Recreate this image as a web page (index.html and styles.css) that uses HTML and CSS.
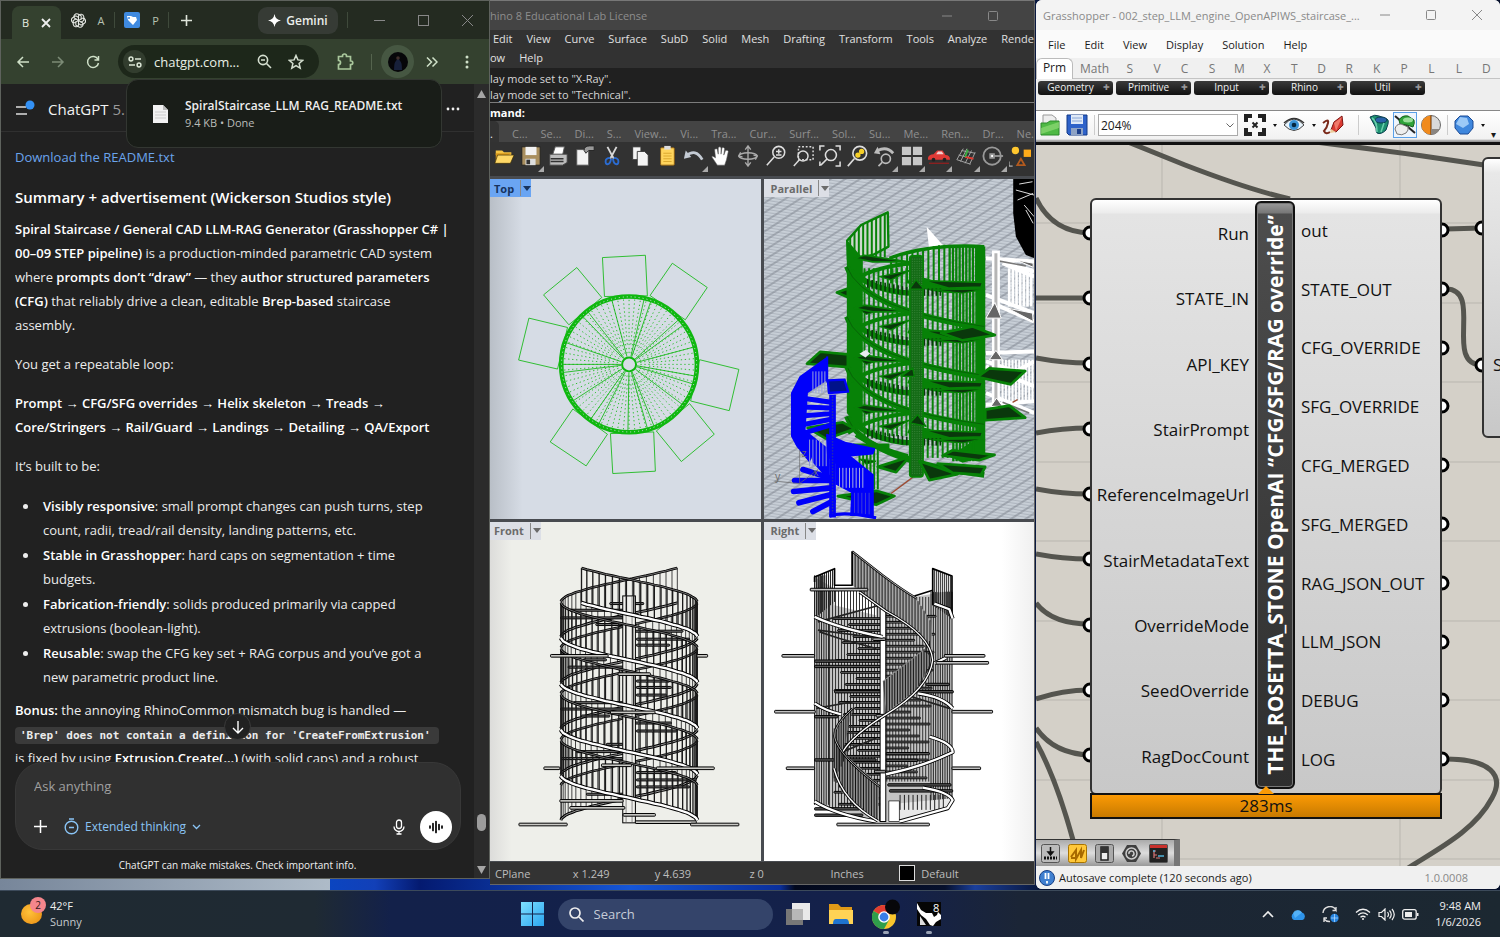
FILE: index.html
```html
<!DOCTYPE html>
<html lang="en">
<head>
<meta charset="utf-8">
<title>Desktop</title>
<link rel="stylesheet" href="styles.css">
</head>
<body>
<div class="desktop">
<main class="windows">

<section class="win chrome" aria-label="Chrome">
  <div class="tabstrip">
    <div class="tab tab-active"><span>B</span><button class="plain" aria-label="Close tab"><svg width="10" height="10" viewBox="0 0 10 10" stroke="#eee" stroke-width="1.8"><path d="M1 1l8 8M9 1l-8 8"/></svg></button></div>
    <div class="tab"><svg width="15" height="15" viewBox="0 0 24 24" fill="none" stroke="#e6e9e4" stroke-width="1.7"><g id="petal"><path d="M12 12l0-7.500a4.500 4.500 0 0 1 8.500 1.500v6l-5 3"/></g><use href="#petal" transform="rotate(60 12 12)"/><use href="#petal" transform="rotate(120 12 12)"/><use href="#petal" transform="rotate(180 12 12)"/><use href="#petal" transform="rotate(240 12 12)"/><use href="#petal" transform="rotate(300 12 12)"/></svg><span>A</span></div>
    <div class="tab"><svg width="16" height="16" viewBox="0 0 16 16"><rect width="16" height="16" rx="2" fill="#3f8ae0"/><path d="M3 4h4l2 1h3l1 3-4 5-5-5z" fill="#fff"/><circle cx="5" cy="6" r="1" fill="#3f8ae0"/></svg><span>P</span></div>
    <button class="plain newtab" aria-label="New tab"><svg width="11" height="11" viewBox="0 0 11 11" stroke="#dfe5db" stroke-width="1.6"><path d="M5.500 0v11M0 5.500h11"/></svg></button>
    <button class="gemini"><svg width="13" height="13" viewBox="0 0 12 12"><path d="M6 0q.8 5.200 6 6-5.200.8-6 6Q5.200 6.800 0 6q5.200-.8 6-6" fill="#fff"/></svg>Gemini</button>
    <div class="winbtns dim">
      <button aria-label="Minimize"><svg width="11" height="11" viewBox="0 0 11 11"><path d="M0 5.500h11"/></svg></button>
      <button aria-label="Maximize"><svg width="11" height="11" viewBox="0 0 11 11"><rect x=".5" y=".5" width="10" height="10"/></svg></button>
      <button aria-label="Close"><svg width="11" height="11" viewBox="0 0 11 11"><path d="M0 0l11 11M11 0L0 11"/></svg></button>
    </div>
  </div>
  <div class="navbar">
    <button class="plain" aria-label="Back"><svg width="14" height="14" viewBox="0 0 14 14" fill="none" stroke="#cfe0c8" stroke-width="1.500"><path d="M13 7H2M7 2L2 7l5 5"/></svg></button>
    <button class="plain" aria-label="Forward"><svg width="14" height="14" viewBox="0 0 14 14" fill="none" stroke="#7c8b76" stroke-width="1.500"><path d="M1 7h11M7 2l5 5-5 5"/></svg></button>
    <button class="plain" aria-label="Reload"><svg width="14" height="14" viewBox="0 0 14 14" fill="none" stroke="#cfe0c8" stroke-width="1.500"><path d="M12 4.500A5.500 5.500 0 1 0 12.500 8M12.500 1v4h-4"/></svg></button>
    <div class="omnibox">
      <button class="plain siteinfo" aria-label="Site information"><svg width="14" height="14" viewBox="0 0 14 14" fill="none" stroke="#dbe6d5" stroke-width="1.500"><circle cx="3" cy="4" r="1.900"/><path d="M7 4h6M1 10h6"/><circle cx="11" cy="10" r="1.900"/></svg></button>
      <input class="url" aria-label="Address" value="chatgpt.com...">
      <button class="plain" aria-label="Zoom"><svg width="15" height="15" viewBox="0 0 15 15" fill="none" stroke="#d5dfd0" stroke-width="1.600"><circle cx="6" cy="6" r="4.600"/><path d="M9.500 9.500L14 14M4 6h4"/></svg></button>
      <button class="plain" aria-label="Bookmark"><svg width="16" height="16" viewBox="0 0 16 16" fill="none" stroke="#d5dfd0" stroke-width="1.500"><path d="M8 1.500l1.900 4.400 4.800.4-3.600 3.100 1.100 4.700L8 11.600l-4.200 2.500 1.100-4.700-3.600-3.100 4.800-.4z"/></svg></button>
    </div>
    <button class="plain ext" aria-label="Extensions"><svg width="17" height="17" viewBox="0 0 17 17" fill="none" stroke="#a9c79c" stroke-width="1.700"><path d="M1.500 3.500h4V3a2 2 0 0 1 4 0v.5h4V8h.5a1.500 1.500 0 0 1 0 3.500h-.5v4.500h-12v-4.500a2 2 0 0 0 0-4z"/></svg></button>
    <span class="navsep"></span>
    <button class="avatar" aria-label="Profile"><svg width="20" height="20" viewBox="0 0 20 20"><circle cx="10" cy="10" r="10" fill="#060609"/><path d="M6 18q0-8 2-9l2-4 2 4q2 1 2 9z" fill="#17203a"/><circle cx="10" cy="6" r="1.800" fill="#3f2f2c"/></svg></button>
    <button class="plain" aria-label="More tools"><svg width="12" height="10" viewBox="0 0 12 10" fill="none" stroke="#cfe0c8" stroke-width="1.500"><path d="M1 .5L5.500 5 1 9.500M6.500.5L11 5 6.500 9.500"/></svg></button>
    <button class="plain" aria-label="Menu"><svg width="4" height="14" viewBox="0 0 4 14" fill="#cfe0c8"><circle cx="2" cy="2" r="1.500"/><circle cx="2" cy="7" r="1.500"/><circle cx="2" cy="12" r="1.500"/></svg></button>
  </div>
  <aside class="download">
    <svg width="15" height="19" viewBox="0 0 15 19"><path d="M0 1h10l5 5v13H0z" fill="#f2f2f2"/><path d="M10 1v5h5z" fill="#bbb"/><path d="M2 8h11M2 11h11M2 14h11" stroke="#ccc"/></svg>
    <div><strong>SpiralStaircase_LLM_RAG_README.txt</strong><span>9.4 KB • Done</span></div>
  </aside>
  <div class="page">
    <div class="chat">
      <header class="chathead">
        <button class="plain" aria-label="Open sidebar"><svg width="20" height="18" viewBox="0 0 20 18"><path d="M1 7h10M1 14h11" stroke="#ddd" stroke-width="1.600"/><circle cx="15" cy="5" r="4.500" fill="#3391f5"/></svg></button>
        <h1>ChatGPT <span>5.</span></h1>
        <button class="plain dots" aria-label="More"><svg width="14" height="4" viewBox="0 0 14 4" fill="#eee"><circle cx="2" cy="2" r="1.400"/><circle cx="7" cy="2" r="1.400"/><circle cx="12" cy="2" r="1.400"/></svg></button>
      </header>
      <article class="answer">
        <p><a href="#readme">Download the README.txt</a></p>
        <h2>Summary + advertisement (Wickerson Studios style)</h2>
        <p class="lead"><b>Spiral Staircase / General CAD LLM-RAG Generator (Grasshopper C# |<br>00–09 STEP pipeline)</b> is a production-minded parametric CAD system<br>where <b>prompts don’t “draw”</b> — they <b>author structured parameters<br>(CFG)</b> that reliably drive a clean, editable <b>Brep-based</b> staircase<br>assembly.</p>
        <p>You get a repeatable loop:</p>
        <p><b>Prompt → CFG/SFG overrides → Helix skeleton → Treads →<br>Core/Stringers → Rail/Guard → Landings → Detailing → QA/Export</b></p>
        <p>It’s built to be:</p>
        <ul>
          <li><b>Visibly responsive</b>: small prompt changes can push turns, step<br>count, radii, tread/rail density, landing patterns, etc.</li>
          <li><b>Stable in Grasshopper</b>: hard caps on segmentation + time<br>budgets.</li>
          <li><b>Fabrication-friendly</b>: solids produced primarily via capped<br>extrusions (boolean-light).</li>
          <li><b>Reusable</b>: swap the CFG key set + RAG corpus and you’ve got a<br>new parametric product line.</li>
        </ul>
        <p class="bonus"><b>Bonus:</b> the annoying RhinoCommon mismatch bug is handled —<br><code>'Brep' does not contain a definition for 'CreateFromExtrusion'</code><br>is fixed by using <b>Extrusion.Create(…)</b> (with solid caps) and a robust</p>
      </article>
      <div class="composer">
        <button class="scrolldown" aria-label="Scroll to bottom"><svg width="12" height="14" viewBox="0 0 12 14" fill="none" stroke="#fff" stroke-width="1.400"><path d="M6 1v12M1 8l5 5 5-5"/></svg></button>
        <input class="ask" aria-label="Ask anything" placeholder="Ask anything">
        <div class="tools">
          <button class="plain" aria-label="Add"><svg width="13" height="13" viewBox="0 0 13 13" stroke="#fff" stroke-width="1.500"><path d="M6.500 0v13M0 6.500h13"/></svg></button>
          <button class="plain thinking"><svg width="15" height="17" viewBox="0 0 15 17" fill="none" stroke="#8ac4f5" stroke-width="1.400"><circle cx="7.500" cy="9.500" r="6.300"/><path d="M5 1h5M5 9.500h5"/></svg>Extended thinking<svg width="9" height="6" viewBox="0 0 9 6" fill="none" stroke="#8ac4f5" stroke-width="1.300"><path d="M1 1l3.500 3.500L8 1"/></svg></button>
          <button class="plain mic" aria-label="Dictate"><svg width="12" height="16" viewBox="0 0 12 16" fill="none" stroke="#fff" stroke-width="1.300"><rect x="3.500" y="1" width="5" height="8.500" rx="2.500"/><path d="M1 7.500a5 5 0 0 0 10 0M6 12.500V15M3.500 15h5"/></svg></button>
          <button class="voice" aria-label="Voice mode"><svg width="16" height="14" viewBox="0 0 16 14" stroke="#000" stroke-width="1.700" stroke-linecap="round"><path d="M2 6v2M5 3.500v7M8 1.500v11M11 4.500v5M14 6v2"/></svg></button>
        </div>
      </div>
      <p class="foot">ChatGPT can make mistakes. Check important info.</p>
    </div>
    <div class="scrollbar"><svg width="9" height="8" viewBox="0 0 9 8"><path d="M4.500 0L9 8H0z" fill="#a5a5a5"/></svg><i class="thumb"></i><svg width="9" height="8" viewBox="0 0 9 8"><path d="M4.500 8L9 0H0z" fill="#a5a5a5"/></svg></div>
  </div>
</section>

<section class="win rhino" aria-label="Rhino">
  <div class="rtitle"><span>hino 8 Educational Lab License</span><div class="winbtns"><button aria-label="Minimize"><svg width="10" height="10" viewBox="0 0 10 10"><path d="M0 5h10"/></svg></button><button aria-label="Maximize"><svg width="10" height="10" viewBox="0 0 10 10"><rect x=".5" y=".5" width="9" height="9" rx="1"/></svg></button></div></div>
  <nav class="rmenu"><div><span>Edit</span><span>View</span><span>Curve</span><span>Surface</span><span>SubD</span><span>Solid</span><span>Mesh</span><span>Drafting</span><span>Transform</span><span>Tools</span><span>Analyze</span><span>Rende</span></div><div class="second"><span>ow</span><span>Help</span></div></nav>
  <div class="history"><p>lay mode set to "X-Ray".</p><p>lay mode set to "Technical".</p></div>
  <label class="command"><b>mand:</b><input aria-label="Command"></label>
  <nav class="rtabs"><span class="on">.</span><span>C...</span><span>Se...</span><span>Di...</span><span>S...</span><span>View...</span><span>Vi...</span><span>Tra...</span><span>Cur...</span><span>Surf...</span><span>Sol...</span><span>Su...</span><span>Me...</span><span>Ren...</span><span>Dr...</span><span>Ne.</span></nav>
  <div class="rtools">
    <button aria-label="Open"><svg viewBox="0 0 24 24"><path d="M3 6h7l2 2h8v3H3z" fill="#f5c443"/><path d="M3 20V9h17" fill="#d99a1c"/><path d="M2 20l3-9h18l-4 9z" fill="#ffd866" stroke="#3a2a00" stroke-width=".7"/></svg></button>
    <button class="more" aria-label="Save"><svg viewBox="0 0 24 24"><path d="M2 2h20v20H2z" fill="#a98f5f" stroke="#222"/><path d="M6 2h12v9H6z" fill="#f2f2f2"/><path d="M6 15h11v7H6z" fill="#ddd"/><path d="M7 16h4v5H7z" fill="#333"/></svg></button>
    <button aria-label="Print"><svg viewBox="0 0 24 24"><path d="M9 2h10l-2 9H6z" fill="#fff" stroke="#555"/><path d="M3 10h19v9l-5 3H3z" fill="#bdbdbd" stroke="#444"/><path d="M4 15h14M4 18h14" stroke="#333" stroke-width="1.500"/></svg></button>
    <button aria-label="Properties"><svg viewBox="0 0 24 24"><path d="M3 5h13v17H3z" fill="#f2f2f2" stroke="#555"/><path d="M11 6q0-5 6-5h5v5h-6l-3 3z" fill="#999" stroke="#222"/></svg></button>
    <button aria-label="Cut"><svg viewBox="0 0 24 24" fill="none"><path d="M7 2l7 13M17 2l-7 13" stroke="#d8d8d8" stroke-width="2"/><path d="M10 14q-5 0-5 4 0 3 2 3 3 0 4-6M14 14q5 0 5 4 0 3-2 3-3 0-4-6" stroke="#2b6bd0" stroke-width="2"/></svg></button>
    <button aria-label="Copy"><svg viewBox="0 0 24 24" fill="#f4f4f4" stroke="#333"><path d="M4 2h9v14H4z"/><path d="M9 7h8l4 4v12H9z"/></svg></button>
    <button aria-label="Paste"><svg viewBox="0 0 24 24"><rect x="5" y="3" width="15" height="19" rx="1" fill="#ffd45c" stroke="#8a5c10"/><rect x="9" y="1" width="7" height="4" fill="#ddd"/><path d="M8 9h9M8 12h9M8 15h9M8 18h9" stroke="#d9a52b"/></svg></button>
    <button class="more" aria-label="Undo"><svg viewBox="0 0 24 24" fill="none"><path d="M3 12q11-9 18 4" stroke="#c4cbd4" stroke-width="3"/><path d="M1 15l2-9 6 7z" fill="#c4cbd4"/></svg></button>
    <button aria-label="Pan"><svg viewBox="0 0 24 24"><path d="M8 22L2 13q0-2 4 1L5 5q2-2 3 0l1 5V3q2-2 3 0v7l1-7q2-1 3 1l-1 7 2-5q2-1 3 1l-2 9-2 6z" fill="#fff" stroke="#555" stroke-width=".6"/></svg></button>
    <button aria-label="Rotate view"><svg viewBox="0 0 24 24" fill="none" stroke="#aaa" stroke-width="1.500"><ellipse cx="12" cy="12" rx="10" ry="3.500"/><path d="M12 1v22M9 5l3-4 3 4M9 19l3 4 3-4M6 13l-4-1 2-4M18 11l4 1-2 4"/></svg></button>
    <button aria-label="Zoom"><svg viewBox="0 0 24 24" fill="none" stroke="#ddd" stroke-width="1.700"><circle cx="15" cy="8" r="6.500"/><path d="M10 13l-8 9M12 7h6M15 4.500v5M12 11h6"/></svg></button>
    <button aria-label="Zoom window"><svg viewBox="0 0 24 24" fill="none" stroke="#ddd" stroke-width="1.600"><path d="M7 2h16v14H7z" stroke-dasharray="2 2"/><circle cx="12" cy="12" r="5.500"/><path d="M8 16l-6 7"/></svg></button>
    <button aria-label="Zoom extents"><svg viewBox="0 0 24 24" fill="none" stroke="#ddd" stroke-width="1.700"><circle cx="13" cy="11" r="6"/><path d="M9 15l-7 7M1 6V1h5M18 1h5v5M23 18v5h-5M1 18v5"/></svg></button>
    <button aria-label="Zoom selected"><svg viewBox="0 0 24 24" fill="none" stroke="#ddd" stroke-width="1.800"><circle cx="15" cy="9" r="7.500"/><path d="M9 15l-7 8"/><circle cx="13" cy="11" r="2" stroke="#f5cf28" fill="#f5cf28"/><circle cx="17" cy="7" r="2" stroke="#f5cf28" fill="#f5cf28"/></svg></button>
    <button class="more" aria-label="Undo view"><svg viewBox="0 0 24 24" fill="none" stroke="#bbb" stroke-width="1.800"><circle cx="14" cy="15" r="5"/><path d="M10 19l-4 4"/><path d="M5 6q10-5 17 3" stroke-width="3"/><path d="M1 9l4-7 3 8z" fill="#bbb" stroke="none"/></svg></button>
    <button class="more" aria-label="Viewports"><svg viewBox="0 0 24 24" fill="#c7c7c7"><path d="M1 2h10v9H1zM13 2h10v9H13zM1 13h10v9H1zM13 13h10v9H13z"/></svg></button>
    <button class="more" aria-label="Render"><svg viewBox="0 0 24 24"><path d="M0 14q1-4 6-4l4-4h6l3 5q5 0 5 5H0z" fill="#e03a36"/><path d="M9 10l2-3h4l2 3z" fill="#f3cfcf"/><circle cx="6" cy="16" r="2" fill="#222"/><circle cx="18" cy="16" r="2" fill="#222"/><path d="M1 20h22" stroke="#8a2020" stroke-width="1.500"/></svg></button>
    <button class="more" aria-label="CPlane"><svg viewBox="0 0 24 24" fill="none" stroke="#aaa"><path d="M2 16L9 4M6 18l7-14M11 20l7-14M16 21l6-13M7 6l15 3M4 11l16 4M2 16l15 5"/><path d="M11 13l9 2" stroke="#e03a2f" stroke-width="2"/><path d="M11 13l3-8" stroke="#3cb043" stroke-width="2"/></svg></button>
    <button class="more" aria-label="Named views"><svg viewBox="0 0 24 24" fill="none" stroke="#999" stroke-width="2"><circle cx="11" cy="12" r="9.500"/><path d="M10 12h13"/><path d="M9 10h4v4H9z" fill="#fff"/></svg></button>
    <button aria-label="Select"><svg viewBox="0 0 24 24"><circle cx="7" cy="6" r="4" fill="#ffc72e"/><path d="M16 5h8v8h-8z" fill="#ffab1a"/><path d="M9 22l4-7 4 7z" fill="none" stroke="#b25a1e" stroke-width="2"/><path d="M0 18v5h4" stroke="#ddd" fill="none"/></svg></button>
  </div>
  <div class="views">
    <div class="view v-top"><svg id="top" viewBox="0 -63 813 1020"></svg><button class="vlabel on"><span>Top</span><i></i></button></div>
    <div class="view v-par"><svg id="parallel" viewBox="3 -3 813 1020"></svg><button class="vlabel"><span>Parallel</span><i></i></button></div>
    <div class="view v-front"><svg id="front" viewBox="0 0 813 1020"></svg><button class="vlabel"><span>Front</span><i></i></button></div>
    <div class="view v-right"><svg id="right" viewBox="3 0 813 1020"></svg><button class="vlabel"><span>Right</span><i></i></button></div>
  </div>
  <div class="rstatus"><span>CPlane</span><span>x 1.249</span><span>y 4.639</span><span>z 0</span><span>Inches</span><span class="layer"><i></i>Default</span></div>
</section>

<section class="win gh" aria-label="Grasshopper">
  <div class="gtitle"><span>Grasshopper - 002_step_LLM_engine_OpenAPIWS_staircase_...</span><div class="winbtns"><button aria-label="Minimize"><svg width="10" height="10" viewBox="0 0 10 10"><path d="M0 5h10"/></svg></button><button aria-label="Maximize"><svg width="10" height="10" viewBox="0 0 10 10"><rect x=".5" y=".5" width="9" height="9" rx="1"/></svg></button><button aria-label="Close"><svg width="10" height="10" viewBox="0 0 10 10"><path d="M0 0l10 10M10 0L0 10"/></svg></button></div></div>
  <nav class="gmenu"><span>File</span><span>Edit</span><span>View</span><span>Display</span><span>Solution</span><span>Help</span></nav>
  <nav class="gtabs"><span class="on">Prm</span><span>Math</span><span>S</span><span>V</span><span>C</span><span>S</span><span>M</span><span>X</span><span>T</span><span>D</span><span>R</span><span>K</span><span>P</span><span>L</span><span>L</span><span>D</span></nav>
  <div class="gpanels"><button>Geometry<i>✚</i></button><button>Primitive<i>✚</i></button><button>Input<i>✚</i></button><button>Rhino<i>✚</i></button><button>Util<i>✚</i></button></div>
  <div class="gtools">
    <button aria-label="Open"><svg width="20" height="22" viewBox="0 0 20 22"><path d="M3 1h9l4 3v8H3z" fill="#eee" stroke="#999"/><path d="M1 9h6l3-2h9v14H1z" fill="#4fb944" stroke="#2c8a2a"/><path d="M1 14l18-6v6L1 20z" fill="#9be07f" opacity=".6"/></svg></button>
    <button aria-label="Save"><svg width="22" height="22" viewBox="0 0 22 22"><path d="M1 1h20v20H3l-2-2z" fill="#2e62c9" stroke="#153a86"/><path d="M5 1h12v9H5z" fill="#dfe9f7"/><path d="M6 4h10M6 7h10" stroke="#8aa6d6"/><path d="M5 14h12v7H5z" fill="#8fa3c4"/><path d="M11 15h4v5h-4z" fill="#1d3f8a"/></svg></button>
    <span class="gsep"></span>
    <select aria-label="Zoom level"><option>204%</option></select>
    <button class="dd" aria-label="Zoom extents"><svg width="22" height="22" viewBox="0 0 22 22" fill="none" stroke="#222" stroke-width="4"><path d="M2 8V2h6M14 2h6v6M20 14v6h-6M8 20H2v-6"/><path d="M8.500 8.500l5 5M13.500 8.500l-5 5" stroke-width="2"/></svg></button>
    <button class="dd" aria-label="Named views"><svg width="22" height="16" viewBox="0 0 22 16"><path d="M1 8q10-12 20 0-10 11-20 0" fill="#e8f3fb" stroke="#444"/><circle cx="11" cy="8" r="5" fill="#3d94d6"/><circle cx="11" cy="8" r="2.300" fill="#06263e"/><path d="M1 6q10-9 20 0" fill="none" stroke="#333" stroke-width="1.500"/></svg></button>
    <button class="sketch" aria-label="Sketch"><svg width="22" height="20" viewBox="0 0 22 20"><path d="M1 8q6-5 5 0t-4 8q2 4 6 1" fill="none" stroke="#7a2a1a" stroke-width="2"/><path d="M9 15l3-8 8-6 1 9-7 7z" fill="#d93a32" stroke="#7d1512"/><path d="M12 8l8-6-6 14z" fill="#ef7a6c"/><path d="M8 18l1-4 5 3z" fill="#eccb9a"/></svg></button>
    <span class="gsep"></span>
    <button aria-label="No preview"><svg width="20" height="22" viewBox="0 0 20 22"><path d="M1 3q5-3 9-1l8 3q2 1 1 5l-2 6q-5 5-9 3-1-1-1-5z" fill="#1d8f6f" stroke="#0b3f4f"/><ellipse cx="12" cy="6" rx="6" ry="3" fill="#2a62a8" stroke="#0b3f4f"/><path d="M3 4q5 3 5 14M15 9l-3 9" fill="none" stroke="#6bd0ae" stroke-width="1.500"/></svg></button>
    <button class="sel" aria-label="Shaded preview"><svg width="22" height="22" viewBox="0 0 22 22"><path d="M1 2l20 17" stroke="#222" stroke-width="2"/><path d="M5 6q3-5 9-4l6 4q1 3-1 7l-6-2-7-1z" fill="#2ea33a" stroke="#15601c"/><ellipse cx="14" cy="6" rx="5" ry="2.500" fill="#9ade9a"/><path d="M1 15q1-5 6-5l7 3q1 3-2 6-4 3-9 1z" fill="#eee" stroke="#777"/></svg></button>
    <button aria-label="Preview settings"><svg width="20" height="20" viewBox="0 0 20 20"><circle cx="10" cy="10" r="9.500" fill="#d9d9d9" stroke="#666"/><path d="M10 .5a9.500 9.500 0 0 0 0 19z" fill="#f08a1d"/><path d="M10 .5v19" stroke="#6b3300"/><path d="M10 14h8.500a9 9 0 0 1-8.500 5.500z" fill="#8a8580"/></svg></button>
    <span class="gsep"></span>
    <button class="dd" aria-label="Mesh"><svg width="20" height="20" viewBox="0 0 20 20"><path d="M6 1h8l5 5v7l-5 6H6l-5-6V6z" fill="#3f87dd" stroke="#1c4a94"/><path d="M6 2l7 1 2 6-6 4-7-4z" fill="#9cc9f7"/></svg></button>
    <button class="over" aria-label="More">▾</button>
  </div>
  <div class="canvas">
    <svg id="wires" width="464" height="722" viewBox="1036 145 464 722"></svg>
    <div class="node">
      <div class="ports in"><span>Run</span><span>STATE_IN</span><span>API_KEY</span><span>StairPrompt</span><span>ReferenceImageUrl</span><span>StairMetadataText</span><span>OverrideMode</span><span>SeedOverride</span><span>RagDocCount</span></div>
      <div class="spine"><span>THE_ROSETTA_STONE OpenAI “CFG/SFG/RAG override”</span></div>
      <div class="ports out"><span>out</span><span>STATE_OUT</span><span>CFG_OVERRIDE</span><span>SFG_OVERRIDE</span><span>CFG_MERGED</span><span>SFG_MERGED</span><span>RAG_JSON_OUT</span><span>LLM_JSON</span><span>DEBUG</span><span>LOG</span></div>
    </div>
    <div class="timing">283ms</div>
    <div class="node2">S</div>
    <div class="dock">
      <button aria-label="Align"><svg width="19" height="19" viewBox="0 0 19 19"><rect x=".5" y=".5" width="18" height="18" rx="2" fill="#bbb" stroke="#555"/><path d="M9.500 3v6M7 8h5l-2.500 3z" stroke="#111" fill="#111" stroke-width="1.500"/><path d="M3 14h13" stroke="#111" stroke-width="3" stroke-dasharray="2 1"/></svg></button>
      <button aria-label="Scribble"><svg width="19" height="19" viewBox="0 0 19 19"><rect x=".5" y=".5" width="18" height="18" rx="2" fill="#ffc83a" stroke="#a87400"/><path d="M3 13l5-7v9l5-9v8l3-8M3 14h5" fill="none" stroke="#a86a00" stroke-width="2"/></svg></button>
      <button aria-label="Toggle"><svg width="19" height="19" viewBox="0 0 19 19"><rect x=".5" y=".5" width="18" height="18" rx="2" fill="#aaa" stroke="#555"/><path d="M6 3h7v13H6z" fill="#eee" stroke="#222" stroke-width="1.500"/><path d="M6 3h7v6H6z" fill="#333"/></svg></button>
      <button aria-label="Spiral"><svg width="19" height="19" viewBox="0 0 19 19"><path d="M5 1h9l5 8.500-5 8.500H5L0 9.500z" fill="#3f3f3f"/><circle cx="9.500" cy="9.500" r="5.500" fill="none" stroke="#ccc" stroke-width="1.500"/><path d="M7 10a2.500 2.500 0 1 1 3 2" fill="none" stroke="#ccc" stroke-width="1.500"/></svg></button>
      <button aria-label="Profiler"><svg width="19" height="19" viewBox="0 0 19 19"><rect x=".5" y=".5" width="18" height="18" rx="1" fill="#222" stroke="#555"/><path d="M1 1h17v3H1z" fill="#c9302c"/><path d="M4 7h3M5 11h3M7 14h4M5 7v7" fill="none" stroke="#d77" stroke-width="1.200"/><path d="M9 12h6M4 7h2" stroke="#4fb3d9" stroke-width="1.500"/></svg></button>
    </div>
  </div>
  <div class="gstatus"><svg width="16" height="16" viewBox="0 0 16 16"><circle cx="8" cy="8" r="7.500" fill="#3f7fd0" stroke="#173f85"/><path d="M6.500 3v6M9.500 3v6M8 11v2.500" stroke="#fff" stroke-width="1.800"/></svg><span>Autosave complete (120 seconds ago)</span><em>1.0.0008</em></div>
</section>
</main>

<footer class="taskbar">
  <div class="weather"><div class="sun"><b>2</b></div><div><span>42°F</span><small>Sunny</small></div></div>
  <div class="apps">
    <button aria-label="Start"><svg width="23" height="24" viewBox="0 0 23 24"><defs><linearGradient id="wg" x2="1" y2="1"><stop stop-color="#7fe0ff"/><stop offset="1" stop-color="#2aa5f0"/></linearGradient></defs><path d="M0 0h11v11.500H0zM12 0h11v11.500H12zM0 12.500h11V24H0zM12 12.500h11V24H12z" fill="url(#wg)"/></svg></button>
    <label class="search"><svg width="15" height="15" viewBox="0 0 15 15" fill="none" stroke="#eee" stroke-width="1.700"><circle cx="6" cy="6" r="5"/><path d="M10 10l4.500 4.500"/></svg><input type="text" placeholder="Search" aria-label="Search"></label>
    <button aria-label="Task view"><svg width="24" height="22" viewBox="0 0 24 22"><path d="M0 6h17v16H0z" fill="#777"/><path d="M6 0h18v17H6z" fill="#e9e9e9"/><path d="M6 6h11v11H6z" fill="#b7b7b7"/></svg></button>
    <button aria-label="Explorer"><svg width="24" height="22" viewBox="0 0 24 22"><path d="M0 1h9l3 3h11v6H0z" fill="#e09a17"/><path d="M0 7h24v14H0z" fill="#ffd355"/><path d="M4 21q0-5 3-5h10q3 0 3 5z" fill="#1f74d0"/></svg></button>
    <button class="run" aria-label="Chrome"><svg width="28" height="30" viewBox="0 0 28 30"><circle cx="12" cy="18" r="12" fill="#f9c52d"/><path d="M12 18L1.600 12A12 12 0 0 1 22.400 12z" fill="#e23c31"/><path d="M12 18L1.600 12A12 12 0 0 0 12 30l5-9z" fill="#2f9e4b"/><circle cx="12" cy="18" r="5.800" fill="#fff"/><circle cx="12" cy="18" r="4.400" fill="#3b7ee8"/><circle cx="20.500" cy="8" r="7.500" fill="#07070a"/></svg></button>
    <button class="run" aria-label="Rhino"><svg width="24" height="24" viewBox="0 0 24 24"><path d="M0 0h24v24H0z" fill="#050505"/><path d="M0 1l4 7 5 3 6 0 2 4 3-2 1-3 3 3v4l-5 3-3 4-3-1-4-6-5-4-4-6z" fill="#fff"/><path d="M3 14l6 9H3z" fill="#ddd"/><text x="16" y="10" font-size="11" fill="#fff" font-family="Open Sans, sans-serif">8</text></svg></button>
  </div>
  <div class="tray">
    <svg width="12" height="8" viewBox="0 0 12 8" fill="none" stroke="#eee" stroke-width="1.600"><path d="M1 7l5-5 5 5"/></svg>
    <svg width="16" height="11" viewBox="0 0 16 11"><path d="M4 11a4 4 0 0 1-.5-7A5 5 0 0 1 12 3.500 4 4 0 0 1 12.500 11z" fill="#2e94ea"/><path d="M3 4a5 5 0 0 1 9-.5L5 9z" fill="#6cc4ff" opacity=".6"/></svg>
    <svg width="17" height="17" viewBox="0 0 17 17" fill="none" stroke="#ddd" stroke-width="1.400"><path d="M1 7a7 7 0 0 1 13-3V1M14 4.500h-3.500M8 15.500A7 7 0 0 1 2 13v3M2 12h3"/><circle cx="12.500" cy="12" r="4.200" fill="#2684e0" stroke="none"/><path d="M9 12h7M12.500 8v8" stroke="#bfe0ff" stroke-width=".7"/></svg>
    <div class="sys"><svg width="16" height="12" viewBox="0 0 16 12" fill="none" stroke="#eee" stroke-width="1.300"><path d="M1 4.500q7-6.500 14 0M3.200 7q4.800-4.300 9.600 0M5.500 9.300q2.500-2.200 5 0"/><circle cx="8" cy="11" r="1" fill="#eee" stroke="none"/></svg>
    <svg width="17" height="13" viewBox="0 0 17 13" fill="none" stroke="#eee" stroke-width="1.200"><path d="M1 4.500h2.500L7 1v11L3.500 8.500H1zM9.500 4q2 2.500 0 5M11.500 2.500q3.500 4 0 8M14 1q4.500 5.500 0 11"/></svg>
    <svg width="17" height="11" viewBox="0 0 17 11"><rect x=".7" y=".7" width="13.500" height="9.500" rx="2" fill="none" stroke="#eee" stroke-width="1.300"/><path d="M3 3h7v5H3zM15 4h1.500v3H15z" fill="#eee"/></svg></div>
    <div class="clock"><span>9:48 AM</span><span>1/6/2026</span></div>
  </div>
</footer>
</div>
<script src="script.js"></script>
</body>
</html>
```
FILE: styles.css
```css
* { box-sizing: border-box; }
body { margin: 0; font-family: "Open Sans", "Noto Sans", sans-serif; font-size: 12px; color: #eee; }
button, input, select { font: inherit; color: inherit; background: none; border: 0; padding: 0; margin: 0; }
button { display: flex; align-items: center; justify-content: center; }
p, h1, h2 { margin: 0; }
svg { flex: none; display: block; }
.desktop { height: 100vh; display: flex; flex-direction: column; background: linear-gradient(90deg, #77869a 0, #aebbc8 22%, #0b45c0 22%, #1240b8 25%, #041a70 28%, #1556d8 42%, #0a2f9c 52%, #02081c 53%, #06102c 63%, #1a3f9c 65%, #06102c 70%); overflow: hidden; }
.windows { flex: 1; min-height: 0; display: grid; grid-template-columns: 490fr 545fr 465fr; }
.win { min-width: 0; display: flex; flex-direction: column; overflow: hidden; white-space: nowrap; }
.winbtns { display: flex; }
.winbtns button { width: 46px; }
.winbtns svg { fill: none; stroke: #888; stroke-width: 1; }
.tab span { color: #b7c2b2; }

/* Chrome */
.chrome { position: relative; margin-bottom: 11px; border: 1px solid #5e625d; background: #212121; z-index: 1; }
.tabstrip { display: flex; height: 38px; flex: none; background: #242b21; padding-left: 11px; align-items: center; }
.tab { display: flex; align-items: center; justify-content: center; gap: 12px; width: 54px; height: 16px; border-right: 1px solid #3f4a3b; font-size: 11px; }
.tab-active { width: 49px; height: 33px; align-self: flex-end; background: #34412f; border: 0; border-radius: 8px 8px 0 0; }
.tab-active span { color: #e5ece1; }
.newtab { width: 34px; height: 30px; }
.gemini { margin-left: auto; width: 80px; height: 27px; border-radius: 9px; background: #363b35; gap: 5px; font-weight: 600; color: #eceeeb; }
.dim { margin-left: 9px; border-left: 1px solid #3f4a3b; padding-left: 9px; }
.dim button { width: 44px; height: 16px; }
.plain { flex: none; }
.navbar { display: flex; align-items: center; height: 45px; flex: none; background: #34412f; padding-left: 4px; }
.navbar > .plain { width: 35px; height: 30px; }
.omnibox { display: flex; align-items: center; height: 33px; width: 201px; margin: 0 9px 0 8px; border-radius: 17px; background: #1d271a; padding: 0 15px 0 5px; gap: 8px; }
.siteinfo { width: 23px; height: 23px; border-radius: 12px; background: #323d2e; }
.url { flex: 1; min-width: 0; font-size: 13px; color: #e9efe6; }
.omnibox .plain:last-child { margin-left: 8px; }
.navsep { width: 1px; height: 16px; background: #55644e; margin: 0 9px 0 8px; }
.avatar { width: 33px; height: 33px; border-radius: 17px; background: #465742; flex: none; }
.download { position: absolute; left: 125px; top: 78px; width: 316px; height: 69px; background: #191d18; border: 1px solid #333732; border-radius: 12px; padding: 0 26px; display: flex; align-items: center; gap: 17px; z-index: 2; }
.download strong { display: block; font-size: 12px; font-weight: 600; line-height: 17px; }
.download span { display: block; font-size: 11px; line-height: 17px; color: #b9bcb8; }
.page { flex: 1; min-height: 0; display: flex; }
.chat { flex: 1; min-width: 0; display: flex; flex-direction: column; padding: 0 14px; }
.chathead { display: flex; align-items: center; height: 48px; flex: none; margin: 0 -14px; padding: 2px 14px 0; border-bottom: 1px solid #303030; }
.chathead h1 { font-size: 15px; font-weight: 400; margin-left: 13px; color: #f2f2f2; }
.chathead h1 span { color: #9a9a9a; }
.dots { margin-left: auto; }
.answer { flex: 1; min-height: 0; overflow: hidden; padding-top: 13px; font-size: 13px; line-height: 24px; color: #ececec; }
.answer a { color: #6ba4ec; text-decoration: none; }
.answer h2 { font-size: 15px; font-weight: 600; line-height: 24px; margin: 16px 0 8px; color: #fff; }
.answer b { font-weight: 600; color: #fff; }
.answer p + p { margin-top: 15px; }
.answer ul { list-style: none; margin: 16px 0 9px; padding-left: 28px; display: grid; gap: 1px; }
.answer li { position: relative; }
.answer li::before { content: ""; position: absolute; left: -20px; top: 10px; width: 5px; height: 5px; border-radius: 3px; background: #eee; }
code { font: bold 11px/18px "DejaVu Sans Mono", monospace; padding: 2px 8px 2px 5px; border-radius: 4px; background: #3a3a3a; }
.composer { position: relative; flex: none; height: 88px; border-radius: 28px; background: #303030; border: 1px solid #383838; padding: 11px 8px 0 18px; margin-right: -1px; }
.ask { display: block; width: 100%; height: 24px; font-size: 13px; }
.ask::placeholder, .search input::placeholder { color: #a0a0a0; opacity: 1; }
.tools { display: flex; align-items: center; height: 33px; margin-top: 12px; }
.thinking { margin-left: 17px; gap: 6px; color: #8ac4f5; font-size: 12px; }
.mic { margin-left: auto; margin-right: 15px; }
.voice { width: 32px; height: 32px; border-radius: 16px; background: #fff; flex: none; }
.scrolldown { position: absolute; top: -50px; left: calc(50% - 14px); width: 27px; height: 27px; border-radius: 14px; background: #212121; border: 1px solid #3a3a3a; }
.foot { height: 28px; line-height: 30px; flex: none; text-align: center; font-size: 10px; color: #f0f0f0; }
.scrollbar { width: 15px; background: #2b2b2b; display: flex; flex-direction: column; align-items: center; padding: 6px 0 4px; }
.thumb { width: 9px; height: 17px; border-radius: 5px; background: #9c9c9c; margin: auto 0 35px; }

/* Rhino */
.rhino { margin-bottom: 5px; background: #3a3a3a; color: #d6d6d6; border-right: 1px solid #666; }
.rtitle { height: 30px; flex: none; display: flex; justify-content: space-between; align-items: center; background: #444; color: #8d8d8d; border-top: 1px solid #777; font-size: 11px; }
.rtitle .winbtns { margin-right: 18px; }
.rmenu { height: 38px; flex: none; background: #323232; color: #e0e0e0; padding-left: 3px; font-size: 11px; line-height: 17px; }
.rmenu div { display: flex; justify-content: space-between; height: 19px; }
.rmenu .second { justify-content: flex-start; gap: 14px; margin-left: -3px; }
.history { height: 35px; flex: none; background: #202020; border-bottom: 1px solid #7c7c7c; padding-top: 3px; font-size: 11px; line-height: 16px; }
.command { height: 18px; flex: none; display: flex; align-items: center; background: #202020; color: #fff; font-size: 11px; }
.rtabs { height: 21px; flex: none; display: flex; justify-content: space-between; background: #444; color: #8f8f8f; font-size: 11px; line-height: 25px; }
.rtabs .on { width: 9px; background: #333; border-radius: 0 5px 0 0; color: #eee; }
.rtools { height: 34px; flex: none; display: grid; grid-template-columns: repeat(20, minmax(0, 1fr)); background: #323232; padding-bottom: 6px; }
.rtools svg { width: 22px; height: 22px; }
.rtools button { position: relative; }
.rtools .more::after { content: ""; position: absolute; right: 0; bottom: -2px; border: 3px solid transparent; border-right-color: #aaa; border-bottom-color: #aaa; }
.views { flex: 1; min-height: 0; display: grid; grid-template: minmax(0, 1fr) minmax(0, 1fr) / minmax(0, 1fr) minmax(0, 1fr); gap: 3px; padding: 3px 0 1px; background: #484b50; }
.view { position: relative; overflow: hidden; }
.view > svg { width: 100%; height: 100%; }
.v-top { background: linear-gradient(90deg, #b9bfc7, #d6dce5 12%); }
.v-par { background: #c9d0d8; }
.v-front { background: linear-gradient(90deg, #dcdcda, #eeefea 8%); }
.v-right { background: linear-gradient(90deg, #fff 88%, #f0f0f0); }
.vlabel { position: absolute; left: 0; top: 0; height: 18px; background: #dcdfe6; color: #6b6b6b; font-weight: 700; font-size: 11px; padding-left: 7px; }
.v-top .vlabel, .v-front .vlabel { padding-left: 4px; }
.vlabel.on { background: #6aa5f3; color: #17335e; }
.vlabel i { margin-left: 6px; width: 11px; height: 16px; border-left: 1px solid #888; display: flex; align-items: center; justify-content: center; }
.vlabel i::before { content: ""; border: 4px solid transparent; border-top: 5px solid currentColor; margin: 4px 0 0 2px; }
.rstatus { height: 23px; flex: none; display: grid; grid-template-columns: 78fr 82fr 95fr 81fr 69fr 135fr; align-items: center; padding-left: 5px; background: #333; color: #bdbdbd; font-size: 11px; border-bottom: 1px solid #666; }
.layer { display: flex; align-items: center; gap: 6px; }
.layer i { width: 16px; height: 16px; background: #000; border: 1px solid #ddd; }

/* Grasshopper */
.gh { margin: 0 0 1px 1px; background: #f0f0f0; color: #1a1a1a; border-radius: 6px; }
.gtitle { height: 30px; flex: none; display: flex; justify-content: space-between; align-items: center; background: #f3f3f3; color: #8a8a8a; padding-left: 7px; font-size: 11px; }
.gmenu { height: 28px; flex: none; display: flex; align-items: center; gap: 19px; padding-left: 12px; background: #fafafa; font-size: 11px; }
.gtabs { height: 21px; flex: none; display: grid; grid-template-columns: 37px 43px repeat(14, minmax(0, 1fr)); background: #f0f0f0; color: #777; text-align: center; line-height: 21px; border-bottom: 1px solid #c4c4c4; }
.gtabs .on { background: #fff; border: 1px solid #bbb; border-bottom: 0; border-radius: 6px 6px 0 0; color: #222; line-height: 18px; }
.gpanels { height: 31px; flex: none; display: flex; gap: 3px; padding: 2px; background: #eee; }
.gpanels button { position: relative; width: 75px; height: 14px; border-radius: 3px; background: linear-gradient(#3a3a3a, #111); color: #f0f0f0; font-size: 10px; line-height: 12px; padding: 0 10px 2px 0; }
.gpanels i { position: absolute; right: 3px; font-style: normal; font-size: 8px; color: #999; }
.gtools { height: 35px; flex: none; display: flex; align-items: center; gap: 6px; padding-left: 4px; background: linear-gradient(#fff, #f1f1f1 28px, #999 30px); border-top: 1px solid #888; border-bottom: 3px solid #111; }
.gsep { width: 1px; height: 20px; background: #ccc; flex: none; }
.gtools select { appearance: none; width: 140px; height: 22px; flex: none; border: 1px solid #aaa; padding-left: 2px; font-size: 12px; margin-left: -3px; background: #fff url("data:image/svg+xml,%3Csvg xmlns='http://www.w3.org/2000/svg' width='8' height='5' fill='none' stroke='%23666'%3E%3Cpath d='M.5.5L4 4 7.500.5'/%3E%3C/svg%3E") no-repeat right 3px center; }
.gtools > * { margin-bottom: 3px; }
.gtools .dd { gap: 7px; }
.gtools .dd::after { content: ""; border: 2px solid transparent; border-top: 3px solid #111; margin-top: 2px; }
.gtools .sketch { margin-right: 8px; }
.gtools .sketch + .gsep { margin-right: 4px; }
.gtools .sel { border: 1px solid #5aa0e8; background: #eef5fd; width: 26px; height: 26px; margin: 0 -2px 3px; }
.gtools .over { margin: 14px 4px 0 auto; font-size: 10px; line-height: 10px; }
.canvas { position: relative; flex: 1; min-height: 0; overflow: hidden; background: #d4d0c8; font-size: 17px; color: #111; }
.canvas > svg { position: absolute; left: 0; top: 0; }
.node { position: absolute; left: 54px; top: 53px; width: 352px; height: 597px; display: grid; grid-template-columns: 163px 40px 1fr; border: 2px solid #333; border-radius: 6px; background: linear-gradient(#fff 0, #ececec 13px, #e4e4e4 14px, #c8c8c8); padding: 1px 0 4px; }
.ports { display: grid; grid-auto-rows: 1fr; align-items: center; }
.in { text-align: right; padding-right: 6px; }
.out { padding-left: 6px; }
.in { padding-left: 3px; justify-items: end; }
.spine { border: 2px solid #111; border-radius: 6px; background: linear-gradient(#999 0, #777 10px, #4d4d4d 11px, #2e2e2e); display: flex; align-items: center; justify-content: center; color: #fff; font-weight: 700; font-size: 21px; line-height: 30px; box-shadow: inset 0 0 0 1px #777; }
.spine span { writing-mode: vertical-rl; transform: rotate(180deg); }
.timing { position: absolute; left: 54px; top: 648px; width: 352px; height: 26px; border: 2px solid #111; background: linear-gradient(#fb9a05, #c87a00); text-align: center; line-height: 22px; }
.timing::before { content: ""; position: absolute; left: 166px; top: -9px; border: 8px solid transparent; border-top: 0; border-bottom-color: #fb9a05; }
.node2 { position: absolute; left: 446px; top: 12px; width: 60px; height: 281px; border: 2px solid #333; border-radius: 6px; background: linear-gradient(#fff 0, #e8e8e8 14px, #c8c8c8); padding: 194px 0 0 9px; line-height: 24px; }
.dock { position: absolute; left: 0; bottom: 0; width: 144px; height: 27px; display: flex; align-items: center; gap: 8px; padding-left: 5px; background: linear-gradient(#aaa, #ddd 50%, #999); border-top: 1px solid #333; border-right: 6px solid #777; }
.gstatus { height: 23px; flex: none; display: flex; align-items: center; gap: 4px; padding: 0 32px 0 3px; background: #f0f0f0; font-size: 11px; }
.gstatus em { margin-left: auto; font-style: normal; color: #888; }

/* Taskbar */
.taskbar { height: 47px; flex: none; display: grid; grid-template-columns: 523fr auto 562fr; align-items: center; border-top: 1px solid #3c4a5a; background: linear-gradient(90deg, #1f2a32 0, #1f2a33 21%, #13214a 26%, #14214a 60%, #1b2536 68%, #1c2831); }
.weather { display: flex; align-items: center; gap: 8px; padding-left: 21px; line-height: 16px; font-size: 12px; }
.weather span, .weather small { display: block; font-size: 11px; }
.weather small { color: #c4c9cd; }
.sun { position: relative; width: 21px; height: 20px; border-radius: 10px; background: radial-gradient(circle at 40% 40%, #ffc23a, #e88a10); }
.sun b { position: absolute; right: -4px; top: -7px; width: 16px; height: 16px; border-radius: 8px; background: #f4868c; color: #33191b; text-align: center; font-weight: 400; font-size: 10px; }
.apps { display: flex; align-items: center; gap: 13px; }
.apps button { position: relative; height: 40px; min-width: 24px; }
.apps button + button { margin-left: 6px; }
.run::after { content: ""; position: absolute; bottom: 0; left: calc(50% - 3px); width: 6px; height: 3px; border-radius: 2px; background: #9aa3b5; }
.apps .run + .run { margin-left: 4px; }
.search { display: flex; align-items: center; gap: 10px; width: 215px; height: 31px; border-radius: 16px; background: #34446a; padding-left: 11px; }
.search input { width: 150px; font-size: 13px; }
.search input::placeholder { color: #c6ccd8; }
.tray { display: flex; align-items: center; justify-content: flex-end; gap: 16px; padding-right: 19px; }
.sys { display: flex; align-items: center; gap: 7px; }
.clock { text-align: right; font-size: 11px; line-height: 16px; }
.clock span { display: block; }
```
FILE: script.js
```js
const NS = "http://www.w3.org/2000/svg";
const $ = (id) => document.getElementById(id);

function add(parent, tag, attrs) {
  const node = document.createElementNS(NS, tag);
  for (const key in attrs) node.setAttribute(key, attrs[key]);
  parent.appendChild(node);
  return node;
}
const path = (parent, d, stroke, width, fill = "none", extra = {}) =>
  add(parent, "path", { d, stroke, "stroke-width": width, fill, "stroke-linejoin": "round", ...extra });
const poly = (parent, pts, fill, stroke = "none", width = 0) =>
  add(parent, "polygon", { points: pts, fill, stroke, "stroke-width": width, "stroke-linejoin": "round" });

function bar(svg, x1, x2, y, h = 8, fill = "#aaa") {
  add(svg, "rect", { x: x1, y: y - h / 2, width: x2 - x1, height: h, rx: 2, fill, stroke: "#000", "stroke-width": 3 });
}

/* height of a polyline at x */
function at(pts, x) {
  for (let i = 1; i < pts.length; i++) {
    const [ax, ay] = pts[i - 1], [bx, by] = pts[i];
    if (x <= bx) return ay + ((x - ax) / (bx - ax)) * (by - ay);
  }
  return pts[pts.length - 1][1];
}

/* plan view */
function drawTop(svg) {
  const g = "#0fb80f", cx = 418, cy = 494;
  const pads = ["338,173 467,166 473,288 344,290", "548,190 653,263 587,360 481,287", "630,480 748,509 719,633 603,604",
    "600,612 674,704 575,786 500,694", "492,697 497,815 369,822 362,702", "353,704 289,799 181,727 249,628",
    "203,508 86,481 117,355 233,383", "237,375 161,285 261,203 336,293"];
  pads.forEach((p) => poly(svg, p, "none", g, 2.500));
  const ray = (deg, from, extra) => {
    const a = (deg * Math.PI) / 180, c = Math.cos(a), s = Math.sin(a);
    path(svg, `M${cx + from * c} ${cy + from * s}L${cx + 205 * c} ${cy + 205 * s}`, g, 2.500, "none", extra);
  };
  for (let d = 0; d < 360; d += 5) ray(d, d % 10 ? 60 : 34, { "stroke-dasharray": "4 8" });
  [-105, -134, -128, -77, -71, -42, -36, -15, 10, 17, 37, 68, 74, 91, 117, 125, 147, 173, 180, 199].forEach((d) => ray(d, 24, {}));
  add(svg, "circle", { cx, cy, r: 204, fill: "none", stroke: g, "stroke-width": 14 });
  add(svg, "circle", { cx, cy, r: 203, fill: "none", stroke: "#d6dce5", "stroke-width": 3, "stroke-dasharray": "3 9" });
  add(svg, "circle", { cx, cy, r: 21, fill: "#d6dce5", stroke: g, "stroke-width": 6 });
}

/* one strand of the double helix, seen from the front */
function strand(svg, o, front) {
  const y = (t) => o.y0 + (o.half * t) / Math.PI;
  let run = [];
  const flush = () => {
    if (run.length > 1) {
      const low = "M" + run.map((p) => p.join(" ")).join("L");
      const high = "M" + run.map((p) => `${p[0]} ${p[1] - o.rail}`).join("L");
      run.forEach((p) => path(svg, `M${p[0]} ${p[1]}V${p[1] - o.rail}`, front ? "#1a1a1a" : "#444", front ? 4 : 3));
      path(svg, high, "#000", 8);
      path(svg, high, "#aaa", 2);
      path(svg, low, "#000", front ? 13 : 9);
      path(svg, low, front ? "#fff" : "#999", front ? 7 : 3);
    }
    run = [];
  };
  for (let t = o.from; t <= o.to + 0.01; t += Math.PI / 30) {
    if (Math.sin(t + 0.0001) >= -0.02 === front) run.push([Math.round(o.cx - o.r * Math.cos(t)), Math.round(y(t))]);
    else flush();
  }
  flush();
}

function drawFront(svg) {
  const base = { cx: 418, r: 205, half: 138, rail: 105, to: 0 };
  const a = { ...base, y0: 208, from: 0.8, to: 5 * Math.PI };
  const b = { ...base, y0: 70, from: 3.93, to: 6 * Math.PI };
  strand(svg, a, false);
  strand(svg, b, false);
  [[360, 462, 245], [240, 410, 265], [212, 400, 288], [318, 418, 308], [430, 580, 328], [440, 600, 352], [440, 540, 370],
    [280, 350, 414], [235, 405, 436], [440, 540, 478], [440, 545, 497], [440, 530, 520], [250, 400, 543], [212, 400, 562],
    [275, 360, 583], [400, 545, 604], [440, 560, 628], [350, 400, 668], [260, 400, 690], [215, 400, 711], [440, 560, 753],
    [440, 620, 775], [440, 600, 796], [290, 400, 818]].forEach((t) => bar(svg, t[0], t[1], t[2], 6, "#777"));
  add(svg, "rect", { x: 399, y: 222, width: 38, height: 682, fill: "#f0f0ec", stroke: "#000", "stroke-width": 3 });
  path(svg, "M409 222V904M427 222V904", "#555", 2);
  strand(svg, a, true);
  strand(svg, b, true);
  [[182, 355, 402], [622, 654, 402], [385, 482, 457], [362, 496, 572], [162, 210, 740], [500, 674, 740], [335, 425, 731],
    [210, 400, 838], [240, 405, 859], [400, 497, 880], [437, 620, 902], [87, 232, 909], [603, 748, 909]]
    .forEach((t) => bar(svg, t[0], t[1], t[2], 8, "#c9c9c5"));
}

function ribbon(svg, top, low, step, stroke) {
  for (let x = top[0][0]; x <= top[top.length - 1][0]; x += step) path(svg, `M${x} ${at(top, x)}V${at(low, x)}`, stroke, 3);
}

function drawRight(svg) {
  const verticals = (x1, x2, y1, y2, step, c = "#222") => {
    for (let x = x1; x <= x2; x += step) path(svg, `M${x} ${y1}V${y2}`, c, 3);
  };
  poly(svg, "155,165 215,200 360,190 455,225 570,205 570,845 410,900 340,900 155,845", "#c4c4c4");
  poly(svg, "215,210 340,200 340,280 215,250", "#fff");
  verticals(155, 200, 160, 850, 7);
  verticals(200, 350, 205, 865, 9, "#333");
  verticals(372, 500, 225, 780, 9, "#333");
  verticals(505, 570, 210, 840, 7);
  ribbon(svg, [[155, 165], [215, 140]], [[155, 290], [215, 240]], 6, "#222");
  ribbon(svg, [[510, 140], [568, 162]], [[510, 250], [568, 290]], 6, "#222");
  path(svg, "M155 180V165L215 140V190H355M510 250V140L568 162V290M455 222L510 205", "#000", 5);
  for (let i = 0; i < 34; i++) {
    const y = 285 + i * 18;
    const l = (i * 47) % 80, r = (i * 61) % 90;
    if (y < 860) bar(svg, 210 + l, 355, y + 5, 5, "#777");
    if (y < 780) bar(svg, 368, 520 - r, y - 2, 5, "#999");
  }
  [[155, 355, 418], [155, 360, 434], [155, 225, 585], [155, 340, 715], [155, 290, 862], [155, 300, 881], [460, 572, 510], [490, 560, 488],
    [375, 565, 790], [380, 570, 808], [370, 500, 696], [370, 465, 716], [215, 355, 510]].forEach((t) => bar(svg, t[0], t[1], t[2], 7, "#555"));
  path(svg, "M165 325L360 350M165 300L350 250M170 330L230 350L340 380M240 690L340 650M160 560L270 540M430 520L560 560", "#222", 5);
  poly(svg, "378,838 410,838 410,900 378,900", "#fff", "#000", 2);
  poly(svg, "412,845 570,830 556,860 412,900", "#e8e8e8");
  verticals(412, 550, 820, 865, 13);
  add(svg, "rect", { x: 352, y: 260, width: 17, height: 640, fill: "#fff", stroke: "#000", "stroke-width": 3 });
  bar(svg, 330, 368, 352, 8, "#999");
  bar(svg, 340, 365, 582, 8, "#999");
  bar(svg, 335, 368, 750, 8, "#999");
  const white = (d, w = 7) => { path(svg, d, "#000", w + 5); path(svg, d, "#fff", w); };
  white("M155 285Q230 320 360 345");
  white("M155 545Q190 568 235 578");
  white("M155 840Q220 880 340 900");
  white("M515 245L560 262L570 290");
  white("M465 515Q540 525 570 560");
  white("M500 645Q570 665 570 692Q480 735 370 758");
  white("M480 798Q560 812 570 836L555 860L410 900");
  white("M515 425L550 408");
  /* crossing guard rail */
  poly(svg, "268,88 360,160 455,225 505,300 510,410 470,330 370,265 268,190", "#a5a5a5");
  ribbon(svg, [[268, 88], [360, 160], [460, 228], [505, 300]], [[268, 190], [370, 265], [470, 330], [508, 400]], 9, "#1a1a1a");
  poly(svg, "360,478 480,385 510,410 460,505 370,578", "#8c8c8c");
  ribbon(svg, [[364, 478], [480, 388], [505, 350]], [[364, 578], [460, 505], [508, 430]], 8, "#111");
  poly(svg, "270,560 215,630 212,740 235,810 345,898 350,790 260,710 240,690", "#8c8c8c");
  ribbon(svg, [[214, 640], [240, 690], [270, 725], [352, 795]], [[214, 770], [240, 815], [280, 855], [352, 900]], 8, "#111");
  ribbon(svg, [[214, 620], [270, 560]], [[214, 780], [270, 660]], 7, "#222");
  white("M268 88L360 160Q420 205 460 228", 2);
  path(svg, "M268 88V190", "#000", 5);
  white("M290 210L370 268Q505 340 510 415Q500 500 370 578Q270 640 240 690", 4);
  white("M270 560Q212 610 215 645Q225 700 350 795", 2);
  white("M213 740Q240 840 345 898", 4);
  [[142, 315, 203], [57, 155, 402], [545, 667, 402], [520, 678, 423], [35, 157, 570], [568, 690, 570], [70, 155, 740], [568, 654, 740], [222, 500, 909]]
    .forEach((t) => bar(svg, t[0], t[1], t[2], 8, "#c2c2c2"));
}

function drawParallel(svg) {
  const defs = add(svg, "defs", {});
  const pattern = (id, w, h, t, d, stroke, sw) => {
    const p = add(defs, "pattern", { id, width: w, height: h, patternUnits: "userSpaceOnUse", patternTransform: t });
    path(p, d, stroke, sw);
  };
  pattern("flat", 40, 9, "rotate(9)", "M0 4H40", "#99a1ab", 2);
  pattern("steep", 40, 24, "rotate(-33)", "M0 12H40", "#7e858e", 3);
  add(svg, "rect", { x: 0, y: -3, width: 820, height: 1024, fill: "url(#flat)" });
  add(svg, "rect", { x: 0, y: -3, width: 820, height: 1024, fill: "url(#steep)" });
  const lines = (x1, x2, y1, y2, step, c, w) => {
    for (let x = x1; x <= x2; x += step) path(svg, `M${x} ${y1}V${y2}`, c, w);
  };
  /* black stair */
  poly(svg, "752,-3 816,-3 816,235 790,225 760,170 752,100", "#000");
  path(svg, "M760 30L815 45M765 60L812 40M785 75L815 110M770 12L810 5M790 90L812 130", "#ddd", 3);
  /* white stair */
  poly(svg, "492,140 540,195 500,215", "#fff");
  lines(740, 812, 265, 380, 11, "#fff", 8);
  lines(720, 812, 540, 670, 10, "#fff", 6);
  path(svg, "M670 235L815 245M690 232L815 275M670 345L815 400M690 370L815 425M670 520L815 515M670 545L760 575L815 545M670 640L815 700M680 600L740 580M670 675L815 665M720 250L815 290M670 560L815 620", "#fff", 12);
  path(svg, "M690 240L790 258M740 385L812 412M680 560L740 585M720 668L800 700", "#777", 5);
  path(svg, "M700 212V700", "#fff", 24);
  path(svg, "M700 220V690", "#b5b5b5", 9);
  ["670,415 697,368 716,415", "680,540 700,512 720,540", "685,680 702,655 720,680", "735,385 810,400 812,425", "760,240 812,262 812,250"].forEach((p) => poly(svg, p, "#666", "#fff", 3));
  path(svg, "M385 942L450 893M750 668L765 660", "#a04a30", 4);

  /* green stair */
  const g = "#078207", dark = "#0a380c";
  path(svg, "M380 235Q500 190 665 200", g, 10);
  const topEdge = [[380, 235], [440, 212], [540, 194], [665, 200]];
  for (let x = 385; x <= 665; x += x > 560 ? 10 : 16) path(svg, `M${x} ${at(topEdge, x)}V310`, g, x > 560 ? 7 : 6);
  poly(svg, "253,182 295,135 375,97 377,200 330,225 255,240", "#cfd8cf", g, 7);
  for (let x = 262; x < 375; x += 13) path(svg, `M${x} ${at([[253, 182], [295, 135], [375, 97]], x)}V232`, g, 6);
  poly(svg, "252,180 300,235 300,760 252,700", g);
  poly(svg, "638,200 668,200 668,830 600,850 560,830 638,780", g);
  lines(305, 450, 265, 770, 14, g, 6);
  lines(480, 560, 320, 835, 15, g, 6);
  lines(572, 636, 320, 845, 10, g, 7);
  for (let k = 0; k < 4; k++) {
    const y = 240 + k * 150;
    path(svg, `M255 ${y + 70}Q330 ${y + 20} 450 ${y + 10}`, g, 12);
    path(svg, `M255 ${y + 25}Q330 ${y + 95} 445 ${y + 100}`, g, 16);
    path(svg, `M252 ${y + 20}Q300 ${y + 150} 665 ${y + 205 - k * 3}`, g, 17);
    path(svg, `M252 ${y + 20}Q300 ${y + 150} 665 ${y + 200 - k * 3}`, "#065406", 2);
    path(svg, `M440 ${y + 55}Q540 ${y + 100} 665 ${y + 75}`, g, 32);
    for (let x = 315; x < 445; x += 13) path(svg, `M${x} ${y + 58 + (x - 315) * 0.2}v26`, dark, 5);
    for (let x = 485; x < 540; x += 12) path(svg, `M${x} ${y + 86}v22`, dark, 5);
    poly(svg, `275,${y - 5} 305,${y - 14} 440,${y + 6} 330,${y + 6}`, dark, g, 5);
    poly(svg, `350,${y + 50} 440,${y + 32} 385,${y + 60}`, dark, g, 4);
    poly(svg, `290,${y + 148} 340,${y + 155} 310,${y + 164}`, dark, g, 3);
    poly(svg, `480,${y + 62} 660,${y + 68} 655,${y + 82} 560,${y + 85}`, dark, g, 5);
    poly(svg, `510,${y + 90} 660,${y + 88} 600,${y + 100}`, dark, g, 3);
  }
  add(svg, "rect", { x: 441, y: 228, width: 40, height: 664, rx: 8, fill: "#146b16", stroke: g, "stroke-width": 5 });
  for (let x = 449; x < 478; x += 7) path(svg, `M${x} 236V885`, "#4b944c", 2, "none", { "stroke-dasharray": "3 4" });
  ["440,328 460,300 484,328", "415,590 450,565 455,590", "442,730 465,705 490,740"].forEach((p) => poly(svg, p, dark, g, 4));
  poly(svg, "290,522 308,511 322,521 308,533", "#e8ebee");
  ["535,460 630,440 697,466 600,482", "645,592 680,566 788,574 745,614", "668,690 740,678 788,714 668,722", "132,552 172,516 255,524 255,562",
    "134,745 240,728 275,748 190,778", "222,338 255,326 255,352", "345,862 440,832 400,878", "470,845 585,884 500,902", "525,852 668,862 655,886 570,880",
    "540,828 570,812 696,826 650,842", "225,950 340,934 395,950 340,976"].forEach((p) => poly(svg, p, dark, g, 8));
  lines(290, 345, 800, 930, 11, g, 6);
  path(svg, "M280 765Q340 805 435 832M270 800H380", g, 16);

  /* blue stair */
  const b = "#0000fa";
  poly(svg, "193,530 193,602 135,640 128,750 160,800 140,850 100,800 84,770 84,640 110,590", b);
  lines(150, 190, 575, 640, 9, "#9aa3dd", 3);
  path(svg, "M193 530V608", b, 6);
  poly(svg, "195,602 245,600 256,636 198,640", "#00128a", b, 7);
  for (let i = 0; i < 5; i++) path(svg, `M115 ${655 + i * 27}L205 ${668 + i * 17}`, b, 15);
  poly(svg, "125,750 200,810 200,905 150,850", b);
  lines(140, 195, 780, 860, 10, "#8f97d8", 3);
  poly(svg, "192,765 250,790 335,808 330,822 262,828 218,850 195,830", b, b, 5);
  poly(svg, "218,835 262,828 333,885 333,1010 262,1010 265,940 218,915", b);
  lines(230, 300, 865, 925, 10, "#a7addf", 3);
  lines(275, 325, 940, 1005, 11, "#3b3bd8", 3);
  [[120, 870, 200, 895], [95, 903, 205, 903], [92, 936, 205, 925], [108, 970, 205, 945], [150, 996, 210, 965]]
    .forEach((r) => path(svg, `M${r[0]} ${r[1]}L${r[2]} ${r[3]}`, b, 17, "none", { "stroke-linecap": "round" }));
  path(svg, "M209 645V1014", b, 20);
  path(svg, "M209 650V1010", "#2a3a9f", 4, "none", { "stroke-dasharray": "4 5" });
  path(svg, "M200 1010Q240 995 340 1015", b, 10);
  path(svg, "M35 905L110 912V810M110 912L165 870", "#6b6b6b", 2);
  const axis = (x, y, s) => { add(svg, "text", { x, y, "font-size": 32, fill: "#6b6b6b", "font-family": "Open Sans, sans-serif" }).textContent = s; };
  axis(36, 903, "y");
  axis(116, 832, "z");
  axis(150, 890, "x");
}

function drawWires(svg) {
  const grid = "#b9b6af";
  [1162, 1400].forEach((x) => path(svg, `M${x} 145V867`, grid, 1));
  for (let y = 223; y < 867; y += 79.5) path(svg, `M1036 ${Math.round(y)}H1500`, grid, 1);
  ["M1128 142L1185 165Q1250 190 1290 199", "M1315 142Q1400 152 1484 165", "M1036 198Q1052 232 1090 233", "M1036 298H1090", "M1036 358Q1062 363 1090 363",
    "M1036 433Q1062 428 1090 428", "M1036 489Q1062 494 1090 494", "M1036 554Q1062 559 1090 559", "M1036 603Q1052 624 1090 624",
    "M1036 699Q1062 690 1090 690", "M1036 728Q1054 754 1090 755", "M1036 742Q1056 778 1073 840", "M1446 229L1482 228",
    "M1446 289C1484 289 1443 365 1482 365", "M1446 759C1490 759 1505 775 1492 798C1475 830 1440 848 1408 868"]
    .forEach((d) => path(svg, d, "#55554f", 5));
  const port = (cx, cy) => add(svg, "circle", { cx, cy, r: 6, fill: "#fff", stroke: "#000", "stroke-width": 3 });
  for (let i = 0; i < 9; i++) port(1090, Math.round(233 + i * 65.25));
  for (let i = 0; i < 10; i++) port(1442, Math.round(230 + i * 58.8));
  port(1482, 228);
  port(1482, 365);
}

drawTop($("top"));
drawFront($("front"));
drawRight($("right"));
drawParallel($("parallel"));
drawWires($("wires"));
```
